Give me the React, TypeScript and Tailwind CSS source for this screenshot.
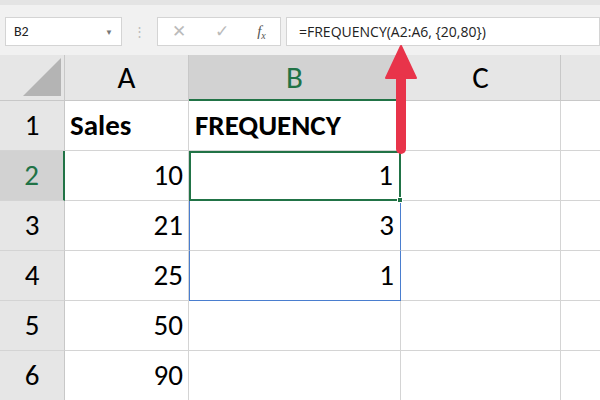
export default function App() {
  const rows = [
    ["Sales", "FREQUENCY"],
    ["10", "1"],
    ["21", "3"],
    ["25", "1"],
    ["50", ""],
    ["90", ""],
  ];
  const font = { fontFamily: "Carlito, 'Open Sans', 'Liberation Sans', sans-serif" };
  return (
    <div className="w-[600px] h-[400px] overflow-hidden bg-white relative" style={font}>
      <div className="h-[55px] bg-[#f1f1f1] border-t-[5px] border-[#e4e4e4] flex items-center pt-[3px]">
        <div className="ml-[5px] w-[117px] h-[29px] bg-white border border-[#d4d4d4] flex items-center justify-between px-[8px] text-[14px] text-[#222]">
          <span>B2</span>
          <span className="text-[8px] text-[#777]">▼</span>
        </div>
        <div className="w-[35px] flex justify-center text-[#bbb] text-[13px]">⋮</div>
        <div className="w-[124px] h-[29px] bg-white border border-[#d4d4d4] flex items-center justify-around text-[#bbb] text-[17px]">
          <span>✕</span>
          <span>✓</span>
          <span className="italic text-[#555] text-[15px]" style={{ fontFamily: "'Liberation Serif', serif" }}>f<sub className="text-[10px]">x</sub></span>
        </div>
        <div className="ml-[5px] flex-1 h-[29px] bg-white border border-[#d4d4d4] flex items-center pl-[12px] text-[14px] text-[#222]" style={{ fontFamily: "'Open Sans', sans-serif" }}>
          =FREQUENCY(A2:A6, {"{20,80}"})
        </div>
      </div>
      <div className="grid grid-cols-[65px_124px_212px_160px_39px] grid-rows-[46px_50px_50px_50px_50px_50px_50px]">
        <div className="bg-[#e6e6e6] border-r border-b border-[#c8c8c8] relative">
          <div className="absolute right-[3px] bottom-[4px] w-0 h-0 border-l-[38px] border-l-transparent border-b-[38px] border-b-[#b4b4b4]" />
        </div>
        <div className="bg-[#e6e6e6] border-r border-b border-[#c8c8c8] flex items-center justify-center text-[31px] text-black">A</div>
        <div className="bg-[#d2d2d2] border-r border-b-[2px] border-r-[#c8c8c8] border-b-[#217346] flex items-center justify-center text-[31px] text-[#217346]">B</div>
        <div className="bg-[#e6e6e6] border-r border-b border-[#c8c8c8] flex items-center justify-center text-[31px] text-black">C</div>
        <div className="bg-[#e6e6e6] border-b border-[#c8c8c8]" />
        {rows.map((r, i) => (
          <>
            <div key={"h" + i} className={`border-b border-[#d4d4d4] flex items-center justify-center text-[29px] ${i === 1 ? "bg-[#d2d2d2] text-[#217346] border-r-[2px] border-r-[#217346]" : "bg-[#e6e6e6] text-black border-r border-r-[#c8c8c8]"}`}>{i + 1}</div>
            <div key={"a" + i} className={`border-r border-b border-[#d4d4d4] flex items-center text-[29px] text-black px-[5px] ${i === 0 ? "font-bold justify-start" : "justify-end"}`}>{r[0]}</div>
            <div key={"b" + i} className={`flex items-center text-[29px] text-black px-[6px] ${i === 0 ? "font-bold justify-start border-r border-b border-[#d4d4d4]" : "justify-end"} ${i === 1 ? "border-2 border-[#217346] relative" : ""} ${i === 2 ? "border-x border-[#4a7ecf] border-b border-b-[#d4d4d4]" : ""} ${i === 3 ? "border-x border-b border-[#4a7ecf]" : ""} ${i >= 4 ? "border-r border-b border-[#d4d4d4]" : ""}`}>
              {r[1]}
              {i === 1 && <div className="absolute right-[-4px] bottom-[-4px] w-[6px] h-[6px] bg-[#217346] border border-white" />}
            </div>
            <div key={"c" + i} className="border-r border-b border-[#d4d4d4]" />
            <div key={"d" + i} className="border-b border-[#d4d4d4]" />
          </>
        ))}
      </div>
      <svg className="absolute left-[382px] top-[44px]" width="38" height="114" viewBox="0 0 38 114">
        <path d="M19 2 L34 34 L4 34 Z" fill="#e8344a" stroke="#e8344a" strokeWidth="2" strokeLinejoin="round" />
        <rect x="14" y="30" width="10" height="80" rx="5" fill="#e8344a" />
      </svg>
    </div>
  );
}
